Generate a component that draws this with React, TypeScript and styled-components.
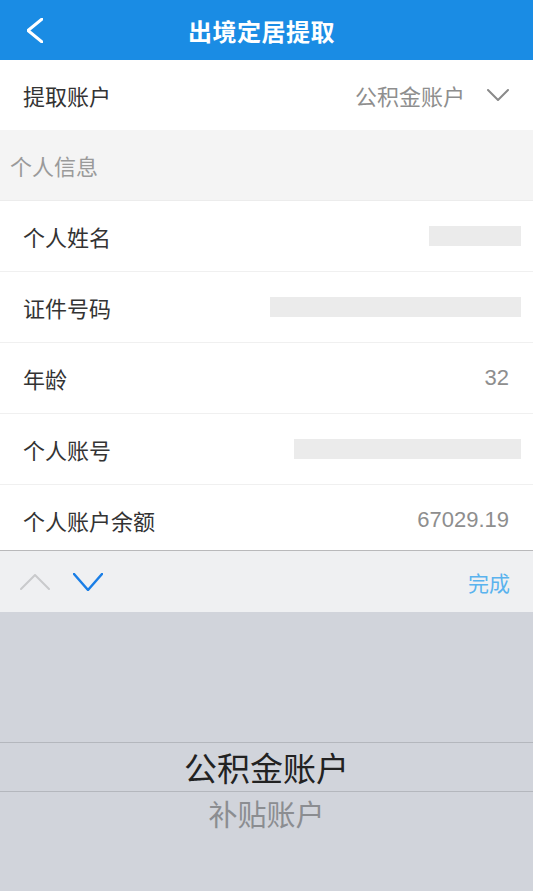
import React from 'react';
import styled, { createGlobalStyle } from 'styled-components';

const GlobalStyle = createGlobalStyle`
  html, body {
    margin: 0;
    padding: 0;
    background: #fff;
  }
  body {
    font-family: "Liberation Sans", "Noto Sans CJK SC", sans-serif;
  }
`;

const Page = styled.div`
  display: flex;
  flex-direction: column;
  width: 100%;
  height: 891px;
  overflow: hidden;
`;

const Header = styled.header`
  display: grid;
  grid-template-columns: 70px 1fr 80px;
  align-items: center;
  height: 60px;
  flex-shrink: 0;
  background: #1a8ce4;
  color: #fff;
`;

const BackButton = styled.div`
  display: flex;
  align-items: center;
  padding-left: 27px;
  height: 100%;
  cursor: pointer;
`;

const Title = styled.h1`
  margin: 0;
  text-align: center;
  font-size: 24px;
  font-weight: 700;
  letter-spacing: 0.5px;
`;

const Content = styled.div`
  flex: 1;
  overflow: hidden;
  background: #fff;
`;

const Row = styled.div<{ $last?: boolean }>`
  display: flex;
  align-items: center;
  justify-content: space-between;
  height: 70px;
  padding: 0 24px 0 23px;
  border-bottom: ${(p) => (p.$last ? 'none' : '1px solid #f0f0f0')};
  font-size: 22px;
`;

const Label = styled.span`
  color: #333;
`;

const Value = styled.span`
  color: #8e8e8e;
  display: flex;
  align-items: center;
  gap: 22px;
`;

const Masked = styled.span<{ $w: number }>`
  display: block;
  height: 20px;
  width: ${(p) => p.$w}px;
  background: #ebebeb;
  margin-right: -12px;
`;

const Section = styled.div`
  display: flex;
  align-items: center;
  height: 70px;
  padding-left: 10px;
  background: #f4f4f4;
  border-bottom: 1px solid #ececec;
  color: #9a9a9a;
  font-size: 22px;
`;

const Toolbar = styled.div`
  display: flex;
  align-items: center;
  height: 61px;
  flex-shrink: 0;
  padding: 0 23px 0 20px;
  background: #eff0f2;
  border-top: 1px solid #b9b9bb;
`;

const Arrows = styled.div`
  display: flex;
  align-items: center;
  gap: 23px;
  margin-right: auto;
`;

const Done = styled.span`
  color: #5ab3ee;
  font-size: 21px;
`;

const Picker = styled.div`
  height: 279px;
  flex-shrink: 0;
  background: #d1d4db;
  padding-top: 130px;
  box-sizing: border-box;
`;

const PickerItem = styled.div<{ $selected?: boolean }>`
  display: flex;
  align-items: center;
  justify-content: center;
  height: ${(p) => (p.$selected ? '48px' : '42px')};
  font-size: ${(p) => (p.$selected ? '33px' : '29px')};
  color: ${(p) => (p.$selected ? '#222' : '#8b8d91')};
  border-top: ${(p) => (p.$selected ? '1px solid #b4b7bd' : 'none')};
  border-bottom: ${(p) => (p.$selected ? '1px solid #b4b7bd' : 'none')};
`;

const Chevron = ({ dir, color, w, h, sw }: { dir: 'up' | 'down' | 'left'; color: string; w: number; h: number; sw: number }) => {
  const d =
    dir === 'down'
      ? `M1 1 L${w / 2} ${h - 1} L${w - 1} 1`
      : dir === 'up'
      ? `M1 ${h - 1} L${w / 2} 1 L${w - 1} ${h - 1}`
      : `M${w - 1} 1 L1 ${h / 2} L${w - 1} ${h - 1}`;
  return (
    <svg width={w} height={h} viewBox={`0 0 ${w} ${h}`} fill="none">
      <path d={d} stroke={color} strokeWidth={sw} strokeLinecap="round" strokeLinejoin="round" />
    </svg>
  );
};

const infoRows = [
  { label: '个人姓名', mask: 92 },
  { label: '证件号码', mask: 251 },
  { label: '年龄', value: '32' },
  { label: '个人账号', mask: 227 },
  { label: '个人账户余额', value: '67029.19' },
];

export default function App() {
  return (
    <>
      <GlobalStyle />
      <Page>
        <Header>
          <BackButton>
            <Chevron dir="left" color="#fff" w={16} h={25} sw={3} />
          </BackButton>
          <Title>出境定居提取</Title>
          <span />
        </Header>
        <Content>
          <Row $last>
            <Label>提取账户</Label>
            <Value>
              公积金账户
              <Chevron dir="down" color="#8a8a8a" w={22} h={12} sw={2} />
            </Value>
          </Row>
          <Section>个人信息</Section>
          {infoRows.map((r, i) => (
            <Row key={r.label} $last={i === infoRows.length - 1}>
              <Label>{r.label}</Label>
              {r.mask ? <Masked $w={r.mask} /> : <Value>{r.value}</Value>}
            </Row>
          ))}
        </Content>
        <Toolbar>
          <Arrows>
            <Chevron dir="up" color="#c9cacc" w={30} h={16} sw={2} />
            <Chevron dir="down" color="#1a7ee6" w={30} h={18} sw={2.5} />
          </Arrows>
          <Done>完成</Done>
        </Toolbar>
        <Picker>
          <PickerItem $selected>公积金账户</PickerItem>
          <PickerItem>补贴账户</PickerItem>
        </Picker>
      </Page>
    </>
  );
}
